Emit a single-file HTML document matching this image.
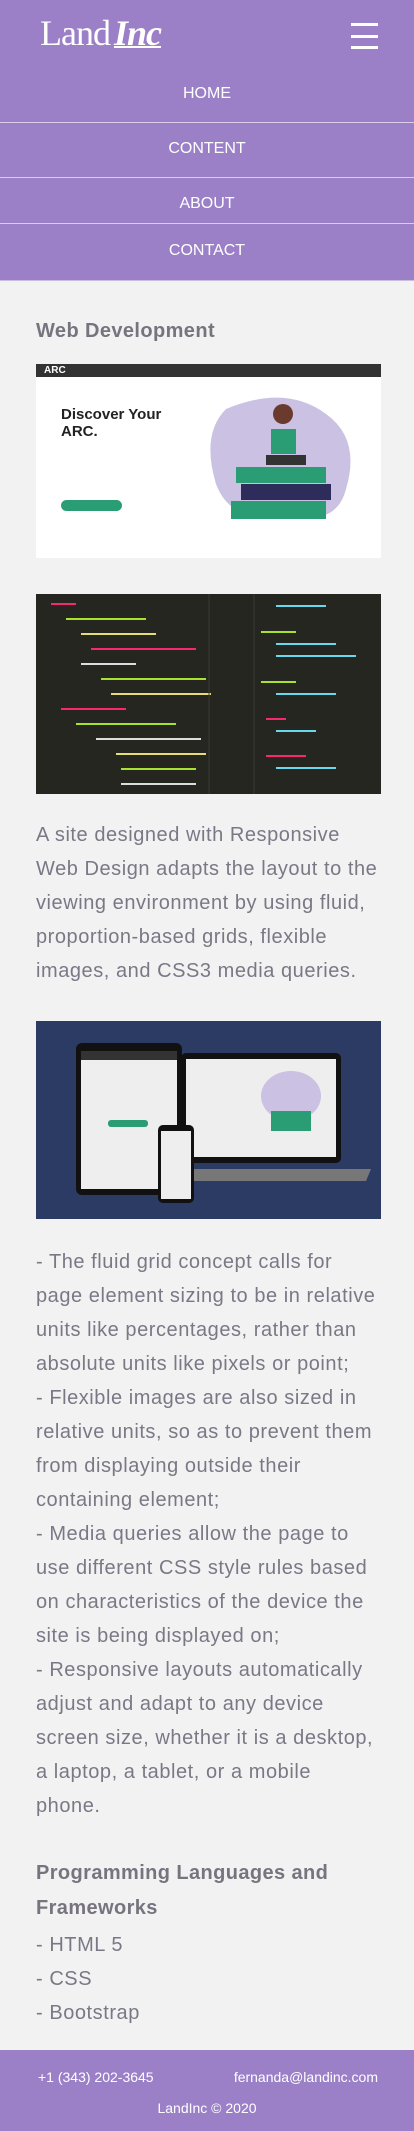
<!DOCTYPE html>
<html><head><meta charset="utf-8">
<style>
*{margin:0;padding:0;box-sizing:border-box}
body{width:414px;height:2131px;background:#f2f2f2;font-family:"Liberation Sans",sans-serif;color:#7b7886;overflow:hidden;position:relative}
header{position:absolute;left:0;top:0;width:414px;height:281px;background:#9b80c8;border-bottom:1px solid #c9bde0}
.logo{position:absolute;left:40px;top:12px;color:#fff;font-family:"Liberation Serif",serif;font-size:36px;letter-spacing:-1px}
.logo i{font-weight:bold;text-decoration:underline;text-decoration-thickness:2px;margin-left:4px}
.ham{position:absolute;left:351px;width:27px;height:3px;background:#fff}
.nav{position:absolute;left:0;width:414px;text-align:center;color:#fff;font-size:16px}
.ln{position:absolute;left:0;width:414px;height:1px;background:#d8cdea}
.c{position:absolute;left:36px;width:345px}
h2{font-size:20px;font-weight:bold;color:#77747f;letter-spacing:0.4px}
.p{font-size:20px;line-height:34px;white-space:nowrap;letter-spacing:0.55px}
footer{position:absolute;left:0;top:2050px;width:414px;height:81px;background:#9b80c8;color:#fff;font-size:14px}
</style></head><body>
<header>
<div class="logo">Land<i>Inc</i></div>
<div class="ham" style="top:23px"></div><div class="ham" style="top:35px"></div><div class="ham" style="top:46px"></div>
<div class="nav" style="top:85px">HOME</div>
<div class="ln" style="top:122px"></div>
<div class="nav" style="top:140px">CONTENT</div>
<div class="ln" style="top:177px"></div>
<div class="nav" style="top:195px">ABOUT</div>
<div class="ln" style="top:223px"></div>
<div class="nav" style="top:242px">CONTACT</div>
</header>

<h2 class="c" style="top:320px">Web Development</h2>

<div class="c" style="top:364px;height:194px;background:#fff;overflow:hidden">
 <div style="height:13px;background:#333"></div>
 <div style="position:absolute;left:8px;top:1px;font-size:10px;font-weight:bold;color:#fff">ARC</div>
 <div style="position:absolute;left:25px;top:42px;font-size:15px;font-weight:bold;color:#222;line-height:17px">Discover Your<br>ARC.</div>
 <div style="position:absolute;left:25px;top:136px;width:61px;height:11px;border-radius:6px;background:#2a9d74"></div>
 <svg style="position:absolute;left:150px;top:25px" width="190" height="160"><path d="M40 20 Q100 -5 140 25 Q175 50 160 100 Q150 140 95 125 Q45 135 30 95 Q15 45 40 20Z" fill="#cbc1e3"/><rect x="45" y="112" width="95" height="18" fill="#2a9d74"/><rect x="55" y="95" width="90" height="16" fill="#2e2c5a"/><rect x="50" y="78" width="90" height="16" fill="#2a9d74"/><circle cx="97" cy="25" r="10" fill="#6b3a2e"/><rect x="85" y="40" width="25" height="25" fill="#2a9d74"/><rect x="80" y="66" width="40" height="10" fill="#333"/></svg>
</div>

<div class="c" style="top:594px;height:200px;background:#25261f;overflow:hidden">
 <svg width="345" height="200"><g stroke-width="2">
 <line x1="15" y1="10" x2="40" y2="10" stroke="#f92672"/><line x1="30" y1="25" x2="110" y2="25" stroke="#a6e22e"/><line x1="45" y1="40" x2="120" y2="40" stroke="#e6db74"/><line x1="55" y1="55" x2="160" y2="55" stroke="#f92672"/><line x1="45" y1="70" x2="100" y2="70" stroke="#ddd"/><line x1="65" y1="85" x2="170" y2="85" stroke="#a6e22e"/><line x1="75" y1="100" x2="175" y2="100" stroke="#e6db74"/><line x1="25" y1="115" x2="90" y2="115" stroke="#f92672"/><line x1="40" y1="130" x2="140" y2="130" stroke="#a6e22e"/><line x1="60" y1="145" x2="165" y2="145" stroke="#ddd"/><line x1="80" y1="160" x2="170" y2="160" stroke="#e6db74"/><line x1="85" y1="175" x2="160" y2="175" stroke="#a6e22e"/><line x1="85" y1="190" x2="160" y2="190" stroke="#ddd"/>
 <line x1="240" y1="12" x2="290" y2="12" stroke="#66d9ef"/><line x1="225" y1="38" x2="260" y2="38" stroke="#a6e22e"/><line x1="240" y1="50" x2="300" y2="50" stroke="#66d9ef"/><line x1="240" y1="62" x2="320" y2="62" stroke="#66d9ef"/><line x1="225" y1="88" x2="260" y2="88" stroke="#a6e22e"/><line x1="240" y1="100" x2="300" y2="100" stroke="#66d9ef"/><line x1="230" y1="125" x2="250" y2="125" stroke="#f92672"/><line x1="240" y1="137" x2="280" y2="137" stroke="#66d9ef"/><line x1="230" y1="162" x2="270" y2="162" stroke="#f92672"/><line x1="240" y1="174" x2="300" y2="174" stroke="#66d9ef"/></g>
 <line x1="173" y1="0" x2="173" y2="200" stroke="#3a3b33"/><line x1="218" y1="0" x2="218" y2="200" stroke="#3a3b33"/></svg>
</div>

<div class="c p" style="top:818px">A site designed with Responsive<br>Web Design adapts the layout to the<br>viewing environment by using fluid,<br>proportion-based grids, flexible<br>images, and CSS3 media queries.</div>

<div class="c" style="top:1021px;height:198px;background:#2c3b64;overflow:hidden">
 <svg width="345" height="198"><rect x="40" y="22" width="106" height="152" rx="6" fill="#111"/><rect x="45" y="30" width="96" height="138" fill="#eee"/><rect x="45" y="30" width="96" height="9" fill="#333"/><rect x="72" y="99" width="40" height="7" rx="3" fill="#2a9d74"/><rect x="145" y="32" width="160" height="110" rx="5" fill="#111"/><rect x="150" y="38" width="150" height="98" fill="#eee"/><path d="M130 148 L335 148 L330 160 L135 160Z" fill="#777"/><rect x="122" y="104" width="36" height="78" rx="5" fill="#111"/><rect x="125" y="110" width="30" height="68" fill="#eee"/><ellipse cx="255" cy="75" rx="30" ry="25" fill="#cbc1e3"/><rect x="235" y="90" width="40" height="20" fill="#2a9d74"/></svg>
</div>

<div class="c p" style="top:1245px">- The fluid grid concept calls for<br>page element sizing to be in relative<br>units like percentages, rather than<br>absolute units like pixels or point;<br>- Flexible images are also sized in<br>relative units, so as to prevent them<br>from displaying outside their<br>containing element;<br>- Media queries allow the page to<br>use different CSS style rules based<br>on characteristics of the device the<br>site is being displayed on;<br>- Responsive layouts automatically<br>adjust and adapt to any device<br>screen size, whether it is a desktop,<br>a laptop, a tablet, or a mobile<br>phone.</div>

<h2 class="c" style="top:1856px;line-height:35px">Programming Languages and<br>Frameworks</h2>
<div class="c p" style="top:1928px">- HTML 5<br>- CSS<br>- Bootstrap</div>

<footer>
<div style="position:absolute;left:38px;top:19px">+1 (343) 202-3645</div>
<div style="position:absolute;right:36px;top:19px">fernanda@landinc.com</div>
<div style="position:absolute;left:0;width:414px;text-align:center;top:50px">LandInc © 2020</div>
</footer>
</body></html>
